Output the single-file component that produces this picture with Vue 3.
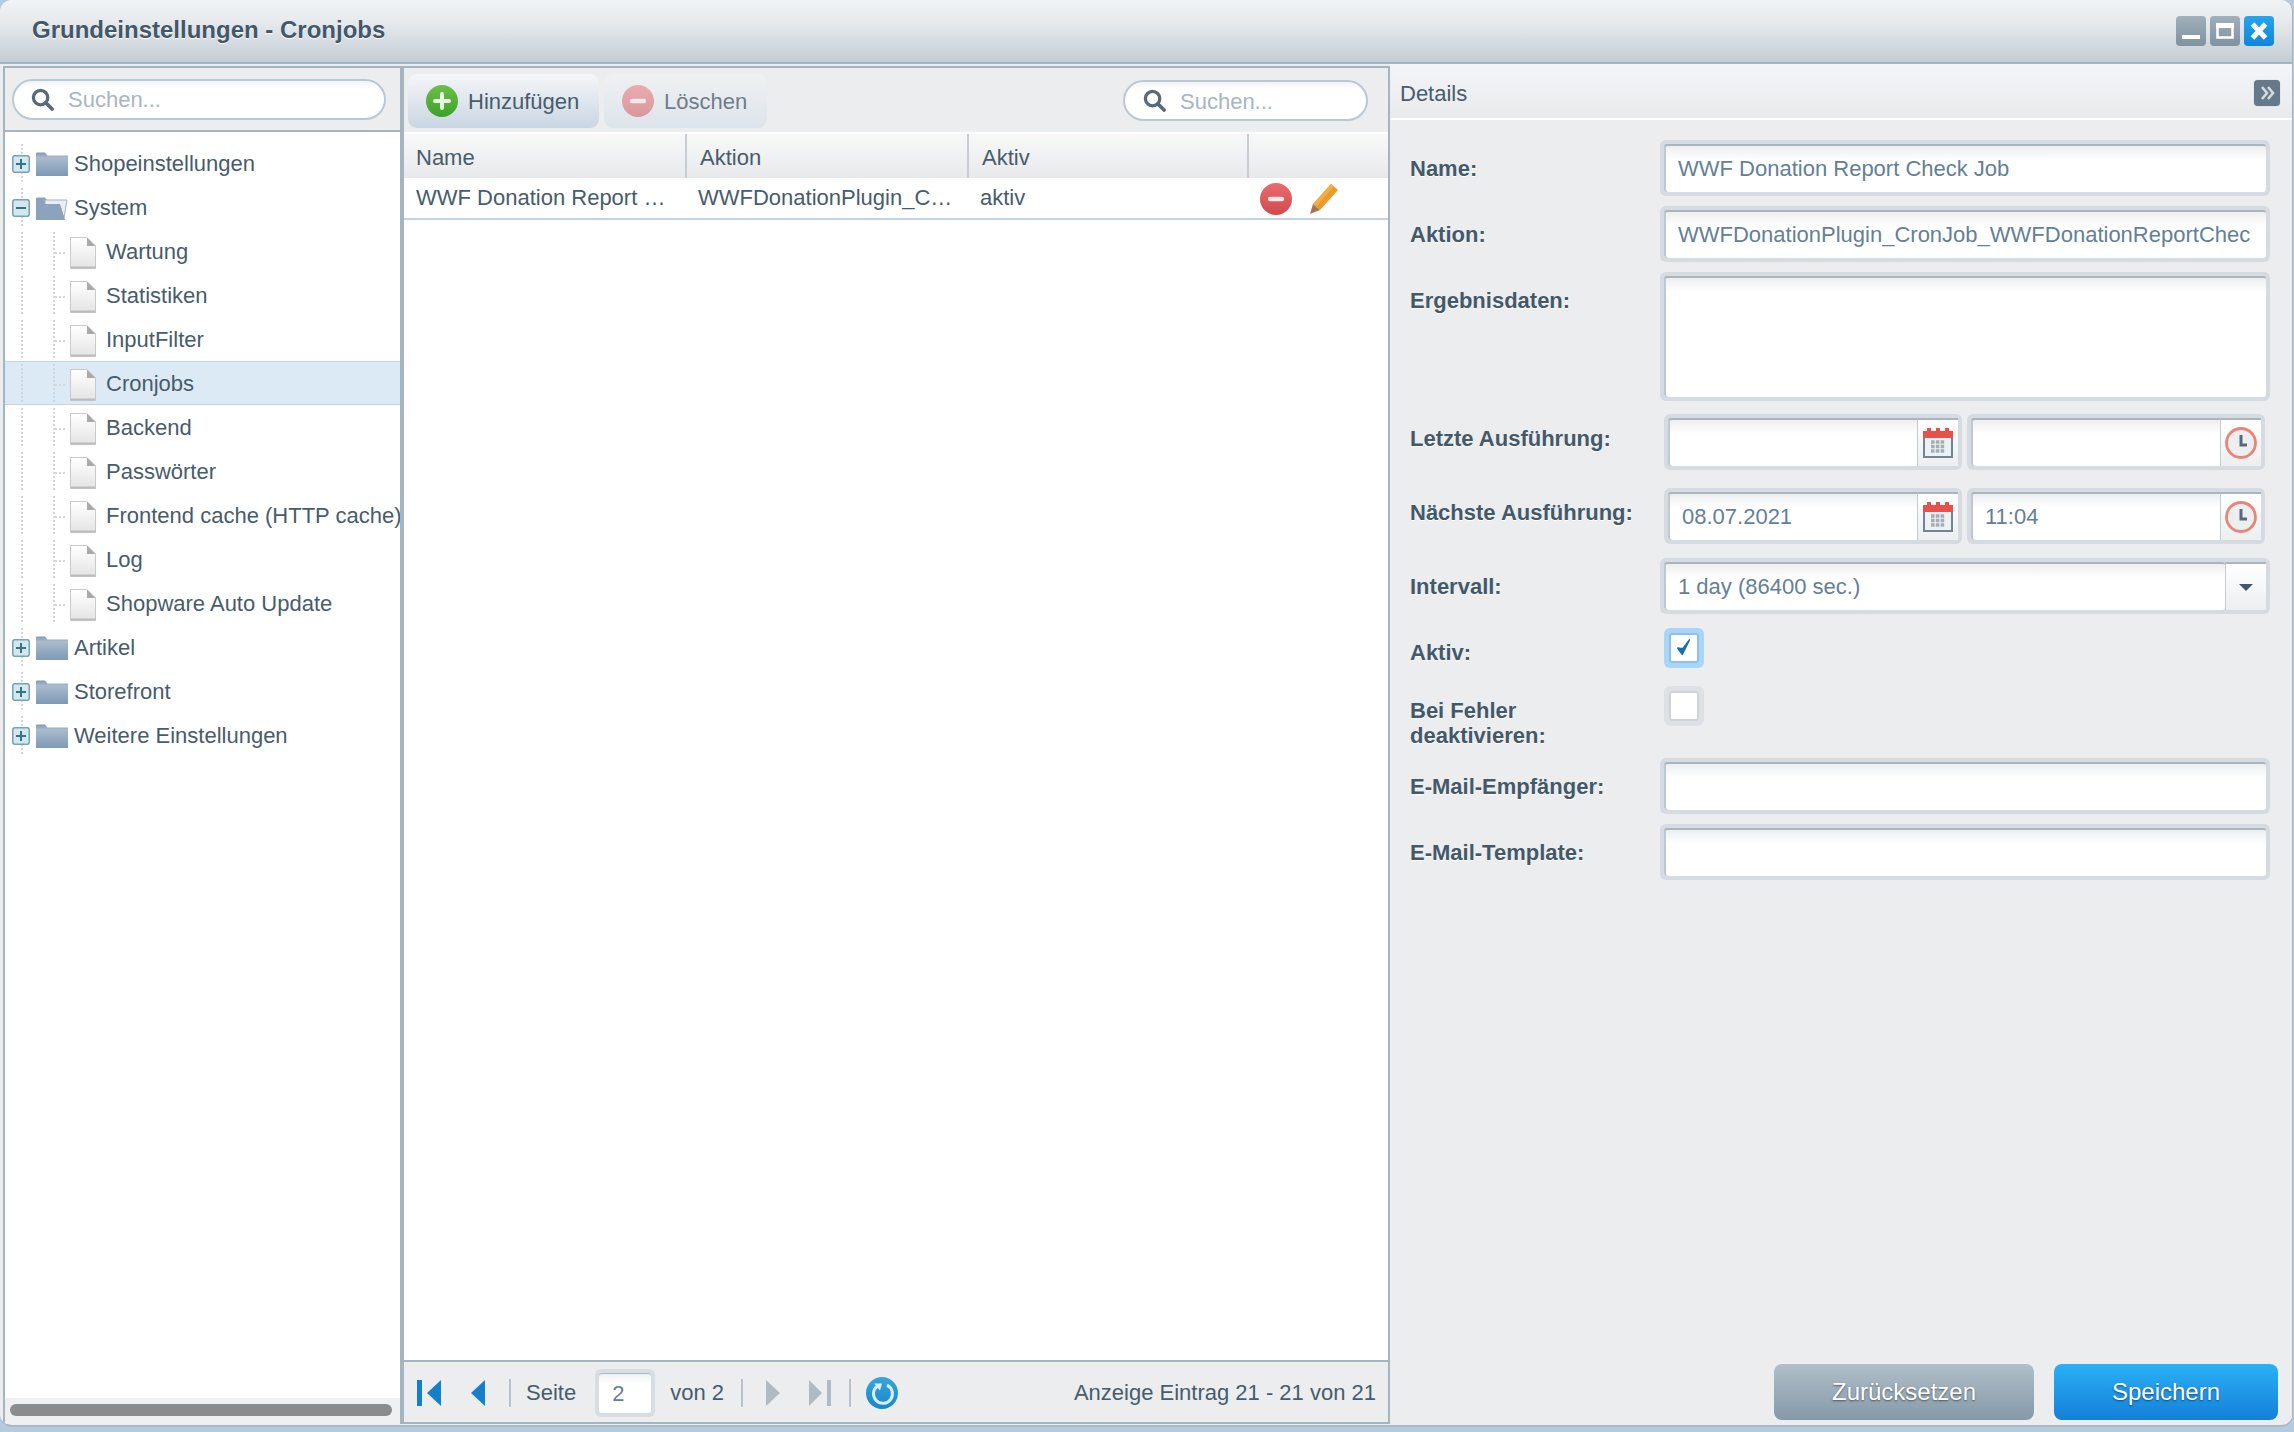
<template>
  <div class="page">
    <svg class="defs" width="0" height="0">
      <defs>
        <linearGradient id="folderFill" x1="0" y1="0" x2="0" y2="1">
          <stop offset="0" stop-color="#8299b2" />
          <stop offset="0.22" stop-color="#a9bbcd" />
          <stop offset="1" stop-color="#7f99b5" />
        </linearGradient>
        <linearGradient id="docFill" x1="0" y1="0" x2="0" y2="1">
          <stop offset="0" stop-color="#ffffff" />
          <stop offset="1" stop-color="#e4e4e4" />
        </linearGradient>
        <linearGradient id="addFill" x1="0" y1="0" x2="0" y2="1">
          <stop offset="0" stop-color="#6cc04a" />
          <stop offset="1" stop-color="#3fa02a" />
        </linearGradient>
        <linearGradient id="delFill" x1="0" y1="0" x2="0" y2="1">
          <stop offset="0" stop-color="#ec6a6d" />
          <stop offset="1" stop-color="#cf4a4e" />
        </linearGradient>
        <linearGradient id="refreshFill" x1="0" y1="0" x2="0" y2="1">
          <stop offset="0" stop-color="#3aa5dc" />
          <stop offset="1" stop-color="#1587c9" />
        </linearGradient>
        <symbol id="i-search" viewBox="0 0 24 24">
          <circle cx="10" cy="10" r="7.5" fill="none" stroke="#566a78" stroke-width="3.4" />
          <path d="M15.5 15.5 L22 22" stroke="#566a78" stroke-width="3.8" stroke-linecap="round" />
        </symbol>
        <symbol id="i-folder" viewBox="0 0 32 24">
          <path d="M0 1.5 Q0 .5 1 .5 H9 L11.5 3.5 H32 V24 H0 Z" fill="url(#folderFill)" />
        </symbol>
        <symbol id="i-folder-open" viewBox="0 0 32 24">
          <path d="M0 2.5 Q0 1.5 1 1.5 H9 L11 4 H17 V24 H0 Z" fill="#8aa2ba" />
          <path d="M9 4 H31 L28 22 L24 10 H9 Z" fill="#e9eef3" stroke="#9fb2c4" stroke-width="1" />
          <path d="M0 8 H24 L29 24 H0 Z" fill="#8ba3bc" />
        </symbol>
        <symbol id="i-doc" viewBox="0 0 26 32">
          <path d="M.5 .5 H17 L25.5 9 V31.5 H.5 Z" fill="url(#docFill)" stroke="#c9c9c9" />
          <path d="M17 .5 V9 H25.5 Z" fill="#a9a9a9" />
          <path d="M.5 29.5 H25.5 V31.5 H.5 Z" fill="#bdbdbd" />
        </symbol>
        <symbol id="i-plus-box" viewBox="0 0 18 18">
          <rect x=".75" y=".75" width="16.5" height="16.5" rx="2" fill="#d5e6ec" stroke="#72a5b5" stroke-width="1.5" />
          <path d="M4 9 H14 M9 4 V14" stroke="#2f7488" stroke-width="2" />
        </symbol>
        <symbol id="i-minus-box" viewBox="0 0 18 18">
          <rect x=".75" y=".75" width="16.5" height="16.5" rx="2" fill="#d5e6ec" stroke="#72a5b5" stroke-width="1.5" />
          <path d="M4 9 H14" stroke="#2f7488" stroke-width="2" />
        </symbol>
        <symbol id="i-add" viewBox="0 0 32 32">
          <circle cx="16" cy="16" r="16" fill="url(#addFill)" />
          <path d="M16 9 V23 M9 16 H23" stroke="#e9f7e2" stroke-width="4" stroke-linecap="round" />
        </symbol>
        <symbol id="i-del" viewBox="0 0 32 32">
          <circle cx="16" cy="16" r="16" fill="url(#delFill)" />
          <path d="M10 16 H22" stroke="#fbe9e9" stroke-width="4.4" stroke-linecap="round" />
        </symbol>
        <symbol id="i-calendar" viewBox="0 0 30 30">
          <rect x="1" y="6" width="28" height="23" fill="#eef1f3" stroke="#6f8494" stroke-width="2" />
          <path d="M0 3 H4 V0 H8 V3 H13 V0 H17 V3 H22 V0 H26 V3 H30 V10 H0 Z" fill="#e8504a" />
          <path d="M8 14 H22 M8 18.5 H22 M8 23 H22" stroke="#a3aeb7" stroke-width="3.4" stroke-dasharray="3.6 1.2" />
        </symbol>
        <symbol id="i-clock" viewBox="0 0 32 32">
          <circle cx="16" cy="16" r="14.5" fill="#eceef0" stroke="#ea8478" stroke-width="2.8" />
          <path d="M16 8 V18 H22" fill="none" stroke="#566a78" stroke-width="3" />
        </symbol>
      </defs>
    </svg>

    <div class="window">
      <header class="titlebar">
        <span class="title">Grundeinstellungen - Cronjobs</span>
        <div class="win-buttons">
          <button class="win-btn">
            <svg width="30" height="30" viewBox="0 0 30 30"><rect x="6" y="19" width="18" height="4" fill="#fff" /></svg>
          </button>
          <button class="win-btn">
            <svg width="30" height="30" viewBox="0 0 30 30"><rect x="7.5" y="8.5" width="15" height="13" fill="none" stroke="#fff" stroke-width="2.5" /><rect x="6" y="7" width="18" height="5" fill="#fff" /></svg>
          </button>
          <button class="win-btn close">
            <svg width="30" height="30" viewBox="0 0 30 30"><path d="M8.5 8 L21.5 22 M21.5 8 L8.5 22" stroke="#fff" stroke-width="5" /></svg>
          </button>
        </div>
      </header>

      <div class="panels">
        <aside class="tree-panel">
          <div class="tree-search">
            <div class="search-box wide">
              <svg class="search-icon"><use href="#i-search" /></svg>
              <span class="placeholder">Suchen...</span>
            </div>
          </div>
          <div class="tree">
            <div
              v-for="node in tree"
              :key="node.label"
              class="tree-row"
              :class="{ selected: node.selected }"
            >
              <template v-if="node.leaf">
                <span class="guide"></span>
                <span class="guide branch"></span>
                <svg class="doc"><use href="#i-doc" /></svg>
                <span class="leaf-label">{{ node.label }}</span>
              </template>
              <template v-else>
                <span class="guide toggle">
                  <svg class="toggle-icon"><use :href="node.open ? '#i-minus-box' : '#i-plus-box'" /></svg>
                </span>
                <svg class="folder"><use :href="node.open ? '#i-folder-open' : '#i-folder'" /></svg>
                <span class="folder-label">{{ node.label }}</span>
              </template>
            </div>
          </div>
          <div class="scrollbar"><div class="scroll-thumb"></div></div>
        </aside>

        <main class="grid-panel">
          <div class="toolbar">
            <button class="tool-btn add">
              <svg class="tool-icon"><use href="#i-add" /></svg><span>Hinzufügen</span>
            </button>
            <button class="tool-btn del">
              <svg class="tool-icon"><use href="#i-del" /></svg><span>Löschen</span>
            </button>
            <div class="search-box small">
              <svg class="search-icon"><use href="#i-search" /></svg>
              <span class="placeholder">Suchen...</span>
            </div>
          </div>
          <div class="grid-head">
            <div class="head-cell name">Name</div>
            <div class="head-cell">Aktion</div>
            <div class="head-cell">Aktiv</div>
            <div class="head-cell last"></div>
          </div>
          <div class="grid-row">
            <div class="cell first-cell">WWF Donation Report Check Job</div>
            <div class="cell">WWFDonationPlugin_CronJob_WWFDonationReportCheck</div>
            <div class="cell">aktiv</div>
            <div class="cell actions">
              <svg class="row-icon"><use href="#i-del" /></svg>
              <svg class="row-icon pencil" viewBox="0 0 30 32">
                <path d="M22 1 L29 7 L11 27 L4 21 Z" fill="#eb9b2c" />
                <path d="M22 1 L25 3.6 L7 23.6 L4 21 Z" fill="#f2ae45" />
                <path d="M4 21 L11 27 L1 31 Z" fill="#a9754e" />
              </svg>
            </div>
          </div>
          <div class="grid-body"></div>
          <div class="pager">
            <svg class="pg first" viewBox="0 0 24 26"><rect x="0" y="0" width="5" height="26" fill="#1580c8" /><path d="M24 0 V26 L10 13 Z" fill="#1580c8" /></svg>
            <svg class="pg prev" viewBox="0 0 14 26"><path d="M14 0 V26 L0 13 Z" fill="#1580c8" /></svg>
            <span class="pg-sep first-sep"></span>
            <span class="pg-text seite">Seite</span>
            <div class="page-input"><span>2</span></div>
            <span class="pg-text von">von 2</span>
            <span class="pg-sep von-sep"></span>
            <svg class="pg next" viewBox="0 0 14 26"><path d="M0 0 V26 L14 13 Z" fill="#aebbc5" /></svg>
            <svg class="pg last" viewBox="0 0 22 26"><path d="M0 0 V26 L13 13 Z" fill="#aebbc5" /><rect x="18" y="0" width="4" height="26" fill="#aebbc5" /></svg>
            <span class="pg-sep last-sep"></span>
            <svg class="pg refresh" viewBox="0 0 32 32">
              <circle cx="16" cy="16" r="16" fill="url(#refreshFill)" />
              <path d="M11.5 9 A9.5 9.5 0 1 0 21 8.2" fill="none" stroke="#d9eefa" stroke-width="3" />
              <path d="M8 6.5 L16 6.5 L14 13.5 Z" fill="#d9eefa" />
            </svg>
            <span class="pg-text info">Anzeige Eintrag 21 - 21 von 21</span>
          </div>
        </main>

        <section class="detail-panel">
          <div class="detail-head">
            <span class="detail-title">Details</span>
            <button class="collapse">
              <svg width="26" height="26" viewBox="0 0 26 26"><path d="M8 7 L13 13 L8 19 M14 7 L19 13 L14 19" fill="none" stroke="#d3dbe1" stroke-width="2.6" /></svg>
            </button>
          </div>
          <form class="form" @submit.prevent>
            <div class="form-row">
              <label>Name:</label>
              <div class="field"><div class="inner">WWF Donation Report Check Job</div></div>
            </div>
            <div class="form-row">
              <label>Aktion:</label>
              <div class="field">
                <div class="inner"><div class="clip">WWFDonationPlugin_CronJob_WWFDonationReportCheck</div></div>
              </div>
            </div>
            <div class="form-row area-row">
              <label>Ergebnisdaten:</label>
              <div class="field area"><div class="inner"></div></div>
            </div>
            <div class="form-row date-row first-date">
              <label>Letzte Ausführung:</label>
              <div class="date-pair">
                <div class="field">
                  <div class="inner"></div>
                  <span class="trigger"><svg class="cal"><use href="#i-calendar" /></svg></span>
                </div>
                <div class="field">
                  <div class="inner"></div>
                  <span class="trigger"><svg class="clock"><use href="#i-clock" /></svg></span>
                </div>
              </div>
            </div>
            <div class="form-row date-row second-date">
              <label>Nächste Ausführung:</label>
              <div class="date-pair">
                <div class="field">
                  <div class="inner">08.07.2021</div>
                  <span class="trigger"><svg class="cal"><use href="#i-calendar" /></svg></span>
                </div>
                <div class="field">
                  <div class="inner">11:04</div>
                  <span class="trigger"><svg class="clock"><use href="#i-clock" /></svg></span>
                </div>
              </div>
            </div>
            <div class="form-row interval-row">
              <label>Intervall:</label>
              <div class="field">
                <div class="inner">1 day (86400 sec.)</div>
                <span class="trigger combo"><i class="arrow"></i></span>
              </div>
            </div>
            <div class="form-row check-row aktiv-row">
              <label>Aktiv:</label>
              <div class="checkbox focused">
                <div class="box">
                  <svg width="18" height="20" viewBox="0 0 20 22"><path d="M3 11 L8 18 L16 2 L8.5 12 Z" fill="#1a6fb0" stroke="#1a6fb0" stroke-width="1.8" stroke-linejoin="round" /></svg>
                </div>
              </div>
            </div>
            <div class="form-row check-row fehler-row">
              <label>Bei Fehler<br />deaktivieren:</label>
              <div class="checkbox"><div class="box"></div></div>
            </div>
            <div class="form-row mail-row">
              <label>E-Mail-Empfänger:</label>
              <div class="field"><div class="inner"></div></div>
            </div>
            <div class="form-row">
              <label>E-Mail-Template:</label>
              <div class="field"><div class="inner"></div></div>
            </div>
          </form>
          <div class="detail-actions">
            <button class="action secondary">Zurücksetzen</button>
            <button class="action primary">Speichern</button>
          </div>
        </section>
      </div>
    </div>
  </div>
</template>

<script setup>
const tree = [
  { label: 'Shopeinstellungen' },
  { label: 'System', open: true },
  { label: 'Wartung', leaf: true },
  { label: 'Statistiken', leaf: true },
  { label: 'InputFilter', leaf: true },
  { label: 'Cronjobs', leaf: true, selected: true },
  { label: 'Backend', leaf: true },
  { label: 'Passwörter', leaf: true },
  { label: 'Frontend cache (HTTP cache)', leaf: true },
  { label: 'Log', leaf: true },
  { label: 'Shopware Auto Update', leaf: true },
  { label: 'Artikel' },
  { label: 'Storefront' },
  { label: 'Weitere Einstellungen' }
]
</script>

<style>
html, body { margin: 0; background: #b4cadf; }
</style>

<style scoped>
.page {
  width: 2294px;
  height: 1432px;
  overflow: hidden;
  background: #b4cadf;
  font-family: "Liberation Sans", Arial, sans-serif;
  font-size: 22px;
  color: #475c6c;
}
.defs { position: absolute; }
button { font-family: inherit; border: 0; padding: 0; }

.window {
  width: 2293px;
  height: 1427px;
  display: flex;
  flex-direction: column;
  background: #ebedef;
  border-right: 1px solid #a4b5c2;
  border-bottom: 2px solid #a9bac7;
  border-radius: 12px;
  box-sizing: border-box;
  overflow: hidden;
}

.titlebar {
  height: 64px;
  flex: none;
  box-sizing: border-box;
  display: flex;
  align-items: center;
  padding: 0 18px 2px 32px;
  background: linear-gradient(#f1f3f5, #e6eaed 35%, #c3cdd4);
  border-bottom: 2px solid #a4b5c2;
}
.title {
  font-size: 24px;
  font-weight: bold;
  color: #42586a;
  text-shadow: 0 1px 1px #fff;
}
.win-buttons { margin-left: auto; display: flex; gap: 4px; margin-top: 2px; }
.win-btn {
  width: 30px;
  height: 30px;
  border-radius: 4px;
  background: linear-gradient(#a0b0bc, #7e929f);
  display: block;
}
.win-btn svg { display: block; }
.win-btn.close { background: linear-gradient(#25a6ee, #0f85dc); }

.panels { flex: 1; display: flex; min-height: 0; padding: 0 0 1px 3px; }

/* left tree */
.tree-panel {
  width: 401px;
  flex: none;
  margin-top: 2px;
  box-sizing: border-box;
  display: flex;
  flex-direction: column;
  border: 2px solid #a4b5c2;
  border-width: 2px 4px 0 2px;
  background: #fff;
}
.tree-search {
  height: 64px;
  flex: none;
  box-sizing: border-box;
  padding: 11px 9px 0 7px;
  background: #ebedef;
  border-bottom: 2px solid #a4b5c2;
}
.search-box {
  display: flex;
  align-items: center;
  box-sizing: border-box;
  background: linear-gradient(#f1f4f6, #fff 8px);
  border: 2px solid #b9c8d4;
  border-radius: 21px;
  color: #a8b6c2;
}
.search-box.wide { height: 41px; width: 374px; padding-left: 17px; }
.search-box.small { height: 41px; width: 245px; margin-left: auto; margin-right: 20px; margin-top: 6px; padding-left: 18px; }
.search-box.small .placeholder { margin-top: 2px; }
.search-icon { width: 23px; height: 23px; flex: none; margin-right: 14px; }

.tree { flex: 1; padding-top: 9px; overflow: hidden; background: #fff; }
.tree-row {
  height: 44px;
  box-sizing: border-box;
  display: flex;
  align-items: center;
  white-space: nowrap;
  overflow: hidden;
}
.tree-row.selected {
  background: #dbeaf5;
  box-shadow: inset 0 1px 0 #c4d5e2, inset 0 -1px 0 #c4d5e2;
}
.guide {
  width: 32px;
  height: 100%;
  flex: none;
  position: relative;
  background-image: repeating-linear-gradient(#d3d7da 0 2px, transparent 2px 4px);
  background-size: 2px 40px;
  background-repeat: no-repeat;
  background-position: 16px 3px;
}
.guide.branch {
  background-image:
    repeating-linear-gradient(#d3d7da 0 2px, transparent 2px 4px),
    repeating-linear-gradient(90deg, #d3d7da 0 2px, transparent 2px 4px);
  background-size: 2px 40px, 12px 2px;
  background-position: 16px 3px, 18px 23px;
  background-repeat: no-repeat;
}
.toggle-icon {
  position: absolute;
  left: 7px;
  top: 14px;
  width: 18px;
  height: 18px;
}
.folder { width: 32px; height: 24px; flex: none; margin-left: -1px; margin-bottom: -1px; }
.folder-label { margin-left: 6px; margin-top: 1px; }
.doc { width: 26px; height: 32px; flex: none; margin-left: 1px; margin-top: 3px; }
.leaf-label { margin-left: 10px; margin-top: 1px; }

.scrollbar {
  height: 26px;
  flex: none;
  box-sizing: border-box;
  padding: 6px 8px 0 5px;
  background: #eef0f2;
}
.scroll-thumb { height: 12px; border-radius: 6px; background: #8b8c8e; }

/* center grid */
.grid-panel {
  width: 986px;
  flex: none;
  margin-top: 2px;
  display: flex;
  flex-direction: column;
  box-sizing: border-box;
  border-top: 2px solid #a4b5c2;
  border-right: 2px solid #a4b5c2;
  background: #fff;
}
.toolbar {
  height: 64px;
  flex: none;
  box-sizing: border-box;
  display: flex;
  padding: 6px 0 0 4px;
  gap: 5px;
  background: #ebedef;
}
.tool-btn {
  height: 54px;
  display: flex;
  align-items: center;
  box-sizing: border-box;
  border-radius: 9px;
  font-size: 22px;
  color: #475c6c;
  background: linear-gradient(#f5f6f8, #c9d6e3);
}
.tool-btn span { margin-top: 2px; }
.tool-btn.add { width: 191px; padding-left: 18px; }
.tool-btn.del { width: 163px; padding-left: 18px; color: #6f7d88; background: linear-gradient(#eff1f3, #dde4eb); }
.tool-icon { width: 32px; height: 32px; margin-right: 10px; }
.tool-btn.del .tool-icon { opacity: .5; }

.grid-head, .grid-row {
  display: grid;
  grid-template-columns: 283px 282px 280px 1fr;
  flex: none;
}
.grid-head {
  height: 46px;
  box-sizing: border-box;
  padding-top: 2px;
  background: linear-gradient(#f9f9f9, #e7e9eb);
  box-shadow: inset 0 2px 0 #fff;
}
.head-cell {
  padding-left: 13px;
  line-height: 47px;
  height: 44px;
  border-right: 2px solid #c7cdd2;
  box-sizing: border-box;
}
.head-cell.name { padding-left: 12px; }
.head-cell.last { border-right: 0; }
.grid-row {
  height: 42px;
  box-sizing: border-box;
  border-bottom: 2px solid #c5d1dc;
  line-height: 40px;
}
.cell {
  padding: 0 12px 0 11px;
  overflow: hidden;
  white-space: nowrap;
  text-overflow: ellipsis;
  min-width: 0;
}
.first-cell { padding-left: 12px; }
.actions { display: flex; align-items: center; gap: 17px; padding-left: 11px; overflow: visible; }
.row-icon { width: 32px; height: 32px; flex: none; margin-top: 2px; }
.row-icon.pencil { width: 30px; }
.grid-body { flex: 1; background: #fff; }

.pager {
  height: 64px;
  flex: none;
  box-sizing: border-box;
  display: flex;
  align-items: center;
  padding-top: 1px;
  background: #ebedef;
  border-top: 2px solid #a4b5c2;
  border-bottom: 2px solid #a4b5c2;
}
.pg { flex: none; height: 26px; }
.pg.first { width: 24px; margin-left: 13px; }
.pg.prev { width: 14px; margin-left: 30px; }
.pg.next { width: 14px; margin-left: 23px; }
.pg.last { width: 22px; margin-left: 29px; }
.pg.refresh { width: 32px; height: 32px; margin-left: 15px; }
.pg-sep { width: 2px; height: 28px; background: #b9c3cb; flex: none; }
.first-sep { margin-left: 24px; }
.von-sep { margin-left: 17px; }
.last-sep { margin-left: 18px; }
.pg-text { flex: none; }
.seite { margin-left: 15px; }
.von { margin-left: 15px; }
.info { margin-left: auto; margin-right: 12px; }
.page-input {
  width: 60px;
  height: 48px;
  margin-left: 19px;
  box-sizing: border-box;
  padding: 4px;
  border-radius: 6px;
  background: #d8dde3;
  flex: none;
}
.page-input span {
  display: block;
  height: 100%;
  box-sizing: border-box;
  padding-left: 13px;
  line-height: 40px;
  color: #648096;
  border-radius: 3px;
  background: linear-gradient(#eef1f3, #fff 10px);
  border-top: 1px solid #aab8c2;
}

/* right details */
.detail-panel {
  flex: 1;
  min-width: 0;
  display: flex;
  flex-direction: column;
  background: #ebedef;
}
.detail-head {
  height: 56px;
  flex: none;
  box-sizing: border-box;
  display: flex;
  align-items: center;
  padding: 0 12px 0 10px;
  background: linear-gradient(#f4f5f8, #e8eaec);
  border-bottom: 2px solid #fff;
}
.detail-title { padding-top: 6px; }
.collapse {
  margin-left: auto;
  margin-top: 3px;
  width: 26px;
  height: 26px;
  border-radius: 4px;
  background: #65798b;
  box-shadow: 0 0 1px #8b9ba8;
}
.collapse svg { display: block; }

.form { flex: 1; padding: 20px 0 0 20px; }
.form-row { display: flex; margin-bottom: 10px; }
.form-row label {
  width: 250px;
  flex: none;
  font-weight: bold;
  line-height: 25px;
  padding-top: 16px;
  text-shadow: 0 1px 0 #fff;
  color: #43596a;
}
.field {
  width: 610px;
  height: 56px;
  box-sizing: border-box;
  display: flex;
  padding: 4px;
  border-radius: 6px;
  background: #d6dbe1;
}
.inner {
  flex: 1;
  min-width: 0;
  box-sizing: border-box;
  padding: 0 15px 0 14px;
  line-height: 45px;
  white-space: nowrap;
  overflow: hidden;
  color: #648096;
  background: linear-gradient(#eceef0, #fff 14px);
  border: solid #a9b5bf;
  border-width: 2px 0 0 0;
  box-shadow: inset 2px 0 0 #bcc8d2;
  border-radius: 3px;
}
.clip { overflow: hidden; }
.area { height: 129px; }
.area-row { margin-bottom: 13px; }
.date-pair { display: flex; gap: 5px; padding-left: 4px; }
.date-pair .field { width: 298px; }
.first-date { margin-bottom: 18px; }
.date-pair .inner { border-radius: 3px 0 0 3px; }
.date-row label { padding-top: 12px; }
.second-date { margin-bottom: 14px; }
.trigger {
  width: 41px;
  flex: none;
  box-sizing: border-box;
  display: flex;
  align-items: center;
  justify-content: center;
  background: linear-gradient(#fff, #eceef0);
  border-left: 1.5px solid #c4ccd2;
  border-top: 2px solid #a9b5bf;
}
.cal { width: 30px; height: 30px; margin-right: 1px; }
.clock { width: 32px; height: 32px; margin-right: 1px; }
.trigger.combo { width: 41px; }
.arrow {
  width: 0;
  height: 0;
  margin-right: 1px;
  border: 7px solid transparent;
  border-top: 7px solid #42586a;
  border-bottom: 0;
}
.interval-row { margin-bottom: 14px; }
.check-row { margin-bottom: 18px; }
.aktiv-row label { padding-top: 12px; }
.fehler-row { margin-bottom: 32px; height: 40px; }
.fehler-row label { padding-top: 12px; }
.check-row .checkbox { margin-left: 4px; }
.checkbox {
  width: 40px;
  height: 40px;
  box-sizing: border-box;
  padding: 5px;
  border-radius: 6px;
  background: #dde1e5;
}
.box {
  height: 100%;
  box-sizing: border-box;
  display: flex;
  align-items: center;
  justify-content: center;
  background: #fff;
  border: 2px solid #cdd3d8;
  border-radius: 3px;
}
.checkbox.focused { background: #a9d6f7; }
.checkbox.focused .box { border-color: #8cc2ea; }

.detail-actions {
  flex: none;
  display: flex;
  justify-content: flex-end;
  gap: 20px;
  padding: 0 14px 4px 0;
}
.action {
  height: 56px;
  border-radius: 8px;
  color: #fff;
  font-size: 24px;
  text-shadow: 0 1px 2px rgba(0, 0, 0, .5);
}
.action.secondary { width: 260px; background: linear-gradient(#b0bfc9, #8599a7); }
.action.primary { width: 224px; background: linear-gradient(#2bb0f7, #1380d7); }
</style>
